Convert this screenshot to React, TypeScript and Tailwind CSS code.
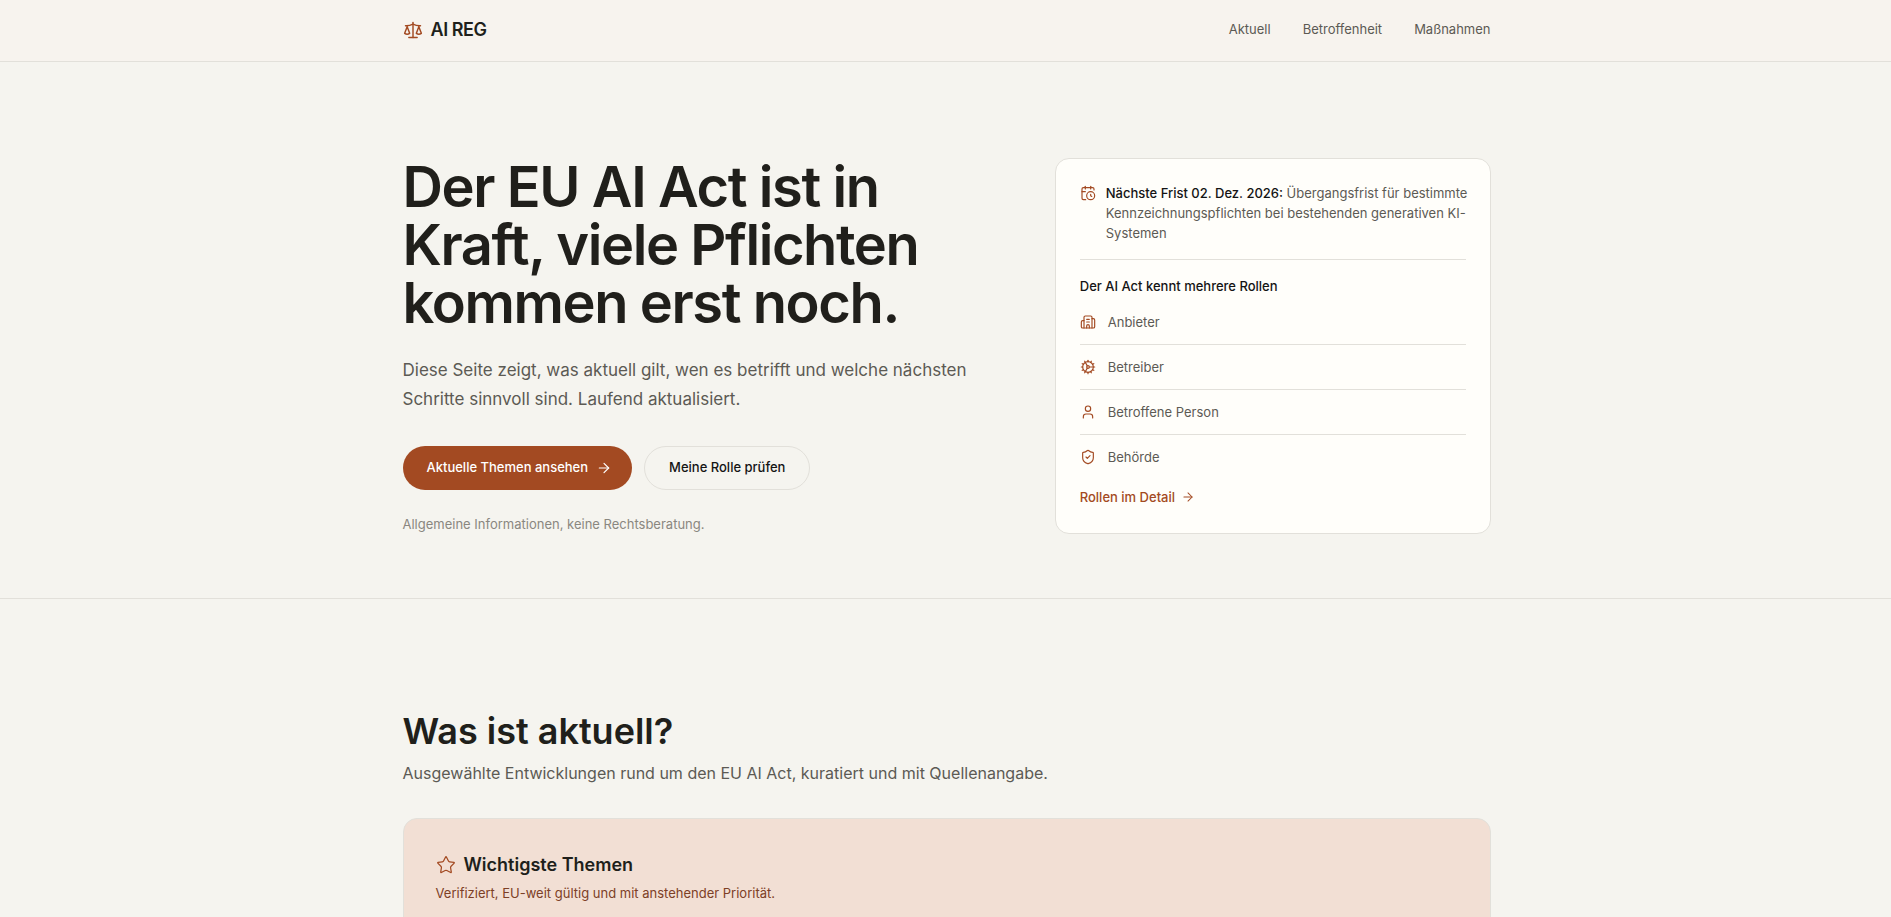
import { ArrowRight, Building2, CalendarClock, Cog, Scale, ShieldCheck, Star, User } from "lucide-react";

const navItems = [
  { label: "Aktuell", href: "#aktuell" },
  { label: "Betroffenheit", href: "#betroffenheit" },
  { label: "Maßnahmen", href: "#massnahmen" },
];

const roles = [
  { label: "Anbieter", icon: Building2 },
  { label: "Betreiber", icon: Cog },
  { label: "Betroffene Person", icon: User },
  { label: "Behörde", icon: ShieldCheck },
];

const container = "mx-auto w-full max-w-[1154px] pl-[34px] pr-8";

function Header() {
  return (
    <header className="border-b border-[#e2e0da] bg-[#f7f3ee]">
      <div className={`${container} flex h-[61px] items-center justify-between pb-[2px]`}>
        <a href="#" className="flex items-center gap-2 text-[18px] font-semibold tracking-tight">
          <Scale className="size-5 text-[#a34a22]" strokeWidth={1.75} />
          AI REG
        </a>
        <nav className="flex items-center gap-8 text-[13px] text-[#5c5a54]">
          {navItems.map((item) => (
            <a key={item.label} href={item.href}>
              {item.label}
            </a>
          ))}
        </nav>
      </div>
    </header>
  );
}

function RolesCard() {
  return (
    <aside className="rounded-[14px] border border-[#e2e0da] bg-[#fffefa] p-6 text-[13px] leading-5">
      <div className="border-b border-[#e2e0da] pb-4">
        <div className="-mr-2 flex gap-[10px]">
          <CalendarClock className="mt-[2px] size-4 shrink-0 text-[#a34a22]" strokeWidth={1.75} />
          <p className="text-[#5c5a54]">
            <strong className="font-medium text-[#141414]">Nächste Frist 02. Dez. 2026:</strong> Übergangsfrist für
            bestimmte Kennzeichnungspflichten bei bestehenden generativen KI-Systemen
          </p>
        </div>
      </div>
      <h2 className="mt-4 font-medium text-[#141414]">Der AI Act kennt mehrere Rollen</h2>
      <ul className="mt-1 divide-y divide-[#e2e0da]">
        {roles.map(({ label, icon: Icon }) => (
          <li key={label} className="flex items-center gap-3 py-3 text-[#5c5a54]">
            <Icon className="size-4 text-[#a34a22]" strokeWidth={1.75} />
            {label}
          </li>
        ))}
      </ul>
      <a href="#betroffenheit" className="mt-2 inline-flex items-center gap-[6px] font-medium text-[#a34a22]">
        Rollen im Detail
        <ArrowRight className="size-[14px]" strokeWidth={1.75} />
      </a>
    </aside>
  );
}

function Hero() {
  return (
    <section className="border-b border-[#e2e0da]">
      <div className={`${container} grid gap-16 pt-24 pb-16 lg:grid-cols-[1.35fr_1fr]`}>
        <div>
          <h1 className="text-[56px] leading-[58px] font-semibold tracking-tight">
            Der EU AI Act ist in Kraft, viele Pflichten kommen erst noch.
          </h1>
          <p className="mt-6 text-[17px] leading-[29px] text-[#5c5a54]">
            Diese Seite zeigt, was aktuell gilt, wen es betrifft und welche nächsten Schritte sinnvoll sind. Laufend
            aktualisiert.
          </p>
          <div className="mt-8 flex flex-wrap gap-3 text-[13px] font-medium">
            <button className="flex h-11 items-center gap-2 rounded-full bg-[#a34a22] pr-5 pl-6 text-white">
              Aktuelle Themen ansehen
              <ArrowRight className="size-4" strokeWidth={1.75} />
            </button>
            <button className="h-11 rounded-full border border-[#e2e0da] px-6 text-[#141414]">
              Meine Rolle prüfen
            </button>
          </div>
          <p className="mt-6 text-[13px] leading-5 text-[#8a8780]">
            Allgemeine Informationen, keine Rechtsberatung.
          </p>
        </div>
        <RolesCard />
      </div>
    </section>
  );
}

function Current() {
  return (
    <section id="aktuell">
      <div className={`${container} pt-28`}>
        <h2 className="text-[36px] leading-10 font-semibold">Was ist aktuell?</h2>
        <p className="mt-[10px] text-[16px] leading-6 text-[#5c5a54]">
          Ausgewählte Entwicklungen rund um den EU AI Act, kuratiert und mit Quellenangabe.
        </p>
        <div className="mt-[33px] rounded-[14px] border border-[#e2e0da] bg-[#f2dfd4] p-8 pb-16">
          <h3 className="flex items-center gap-2 text-[18px] leading-7 font-semibold">
            <Star className="size-5 text-[#a34a22]" strokeWidth={1.5} />
            Wichtigste Themen
          </h3>
          <p className="mt-1 text-[13px] leading-5 text-[#7d4026]">
            Verifiziert, EU-weit gültig und mit anstehender Priorität.
          </p>
        </div>
      </div>
    </section>
  );
}

export default function App() {
  return (
    <div className="min-h-screen bg-[#f5f4ef] font-['Inter',sans-serif] text-[#201f1b]">
      <Header />
      <main>
        <Hero />
        <Current />
      </main>
    </div>
  );
}
